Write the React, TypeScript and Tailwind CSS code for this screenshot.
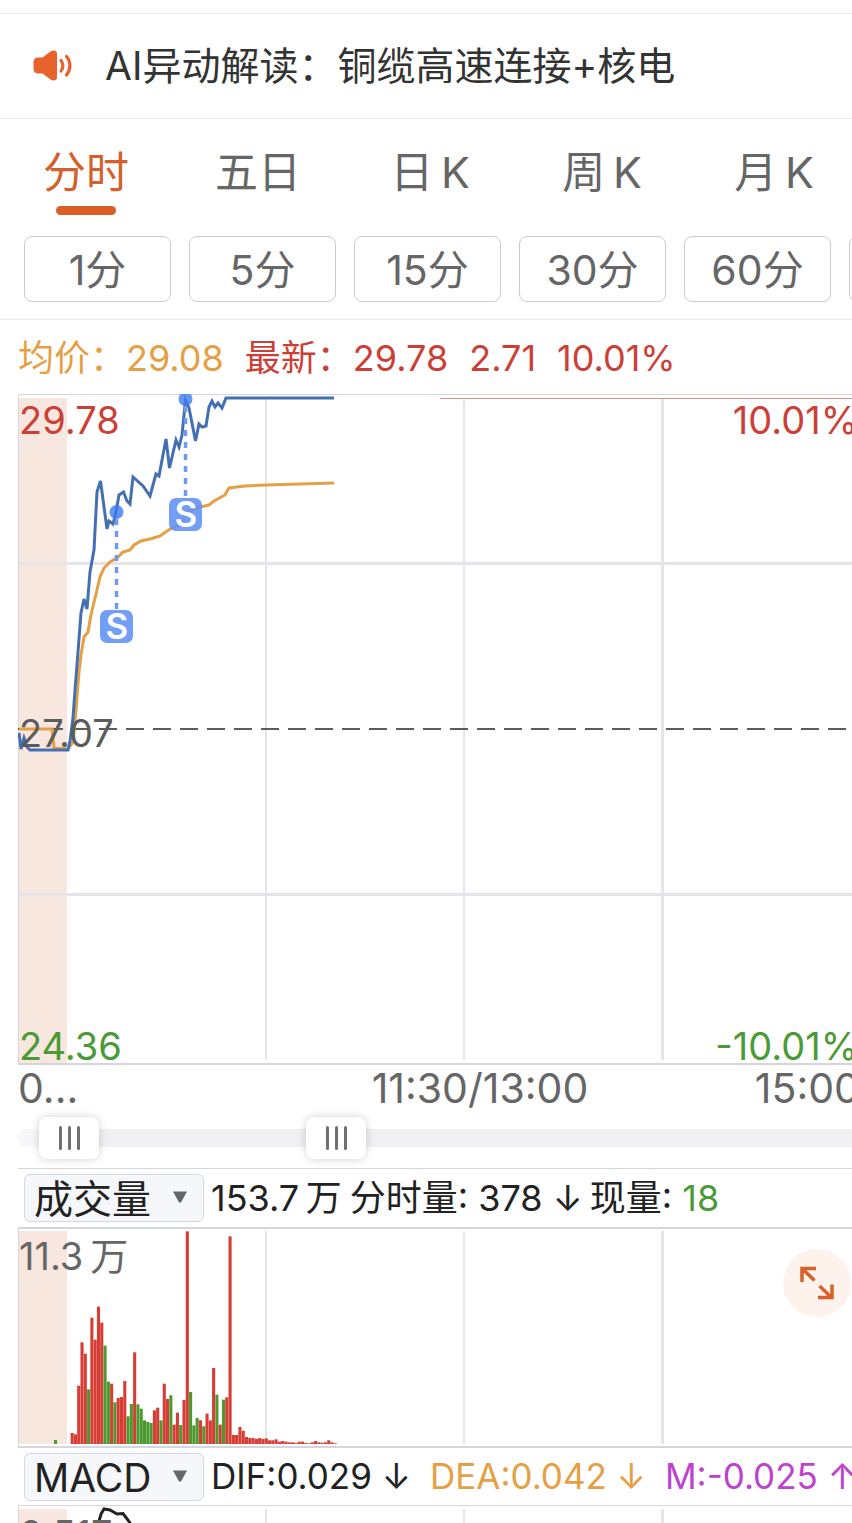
import { useState } from 'react'
import clsx from 'clsx'

const tabs = ['分时', '五日', '日\u2009K', '周\u2009K', '月\u2009K']
const intervals = ['1分', '5分', '15分', '30分', '60分', '120分']

const pricePoints =
  '19,733 21,749 24,738 27,747 30,750 68,750 70,741 73,718 75,690 78,652 81,613 84,599 87,609 90,572 94,550 97,492 100.5,481 107,529 109,521 113,524 116,512 119,495 123.5,492 127,501 130,504 133,477 143,486 150,496 156,474 159,476 166,439 169.5,468 176,440 179,447 182,435 185.5,400 189,408 195.5,441 199,424 202,427 206,426 209,407 212,401 215,407 218,403 222,408 226,398 334,398'

const averagePoints =
  '19,729 52,729 54,748 68,749 73,742 76,710 79,672 81,655 84,637 88,632 91,615 96,594 100,577 104,568 110,562 117,558 123,552 130,550 134,545 141,541 150,539 160,536 170,529 182,524 186,512 200,507 209,505 214,501 225,495 229,488 245,486 266,485 334,483'

const sellMarks = [
  { x: 117, dot: 512, badge: 627 },
  { x: 186, dot: 399, badge: 515 },
]

// one entry per minute, negative = down minute
const volumes = [
  33, 29, 175, 305, 271, -164, 379, 313, 412, 364, -295, -187, 181, -125, 138, 141, 189, -83, -120, 275,
  -119, -106, -71, -66, -63, 101, 109, -71, 181, 135, -146, 58, 94, -57, 132, 638, -156, -56, -78, 71,
  -53, 91, 71, 228, -148, 58, -133, 140, 623, 27, 27, 51, 40, 21, 18, 18, 15, 18, 15, 17,
  11, 11, 14, 7, 9, 7, 5, 5, 3, 7, 7, 3, 2, 5, 9, 5, 4, 5, 11, 5, 2,
]

function SpeakerIcon() {
  return (
    <svg className="h-8 w-10 shrink-0" viewBox="0 0 40 32" fill="none">
      <path
        d="M5 7.500h4.500L17.500 1.500C20 -.2 24 .2 24 3.500v24c0 3.300-4 3.700-6.500 2L9.500 23.500H5C2.200 23.500.5 21.700.5 19v-7C.5 9.200 2.200 7.500 5 7.500Z"
        fill="#e8632c"
      />
      <path d="M28 10.500c2.500 3 2.500 7.500 0 10.500M33.500 6.500c4.500 5 4.500 13.500 0 18.500" stroke="#e8632c" strokeWidth="3.200" strokeLinecap="round" />
    </svg>
  )
}

function ExpandIcon() {
  return (
    <svg className="h-9 w-9" viewBox="0 0 36 36" fill="none" stroke="#d9622b" strokeWidth="3.500">
      <path d="M3 17V3.500H17M3.500 4l12 11.500M33 19.500v13H19M32.500 32.500L20.500 21" />
    </svg>
  )
}

function Handle({ value }: { value: number }) {
  return (
    <div
      className="pointer-events-none absolute top-0 flex h-[42px] w-[60px] -translate-x-1/2 items-center justify-center gap-[6px] rounded-lg bg-white shadow-[0_0_8px_rgba(0,0,0,0.18)]"
      style={{ left: `${value / 10}%` }}
    >
      <span className="h-6 w-[3px] rounded-full bg-[#707070]" />
      <span className="h-6 w-[3px] rounded-full bg-[#707070]" />
      <span className="h-6 w-[3px] rounded-full bg-[#707070]" />
    </div>
  )
}

function RangeSlider() {
  const [from, setFrom] = useState(61)
  const [to, setTo] = useState(378)

  return (
    <div className="relative flex h-[42px] items-center">
      <div className="h-[18px] w-full overflow-hidden rounded-full bg-[#f0f0f3]">
        <div className="h-full bg-[#f7f7f9]" style={{ width: `${from / 10}%` }} />
      </div>
      <input
        type="range"
        aria-label="开始时间"
        min={0}
        max={1000}
        value={from}
        onChange={e => setFrom(Math.min(Number(e.target.value), to))}
        className="absolute inset-y-0 left-0 w-1/5 opacity-0"
      />
      <input
        type="range"
        aria-label="结束时间"
        min={0}
        max={1000}
        value={to}
        onChange={e => setTo(Math.max(Number(e.target.value), from))}
        className="absolute inset-y-0 right-0 w-4/5 opacity-0"
      />
      <Handle value={from} />
      <Handle value={to} />
    </div>
  )
}

function IndicatorSelect({ label, options }: { label: string; options: string[] }) {
  return (
    <div className="relative shrink-0">
      <select
        aria-label={label}
        className="block h-12 w-[180px] appearance-none rounded-md border border-[#d5d7de] bg-[#f6f7fa] pt-[2px] pl-[9px] text-[39px] leading-[44px] text-[#222]"
      >
        {options.map(option => (
          <option key={option}>{option}</option>
        ))}
      </select>
      <svg className="pointer-events-none absolute top-[17px] right-[17px] h-3 w-[14px]" viewBox="0 0 14 12">
        <path d="M0 .5h14L8 11.500H6Z" fill="#666" />
      </svg>
    </div>
  )
}

function PriceChart() {
  return (
    <div className="relative">
      <svg className="block h-auto w-full" viewBox="18 394 842 671" fill="none">
        <rect x="19" y="398" width="48" height="665" fill="#f8e7de" />
        <path d="M266 398V1060M464 398V1060" stroke="#e4e5ea" strokeWidth="2" />
        <path d="M662.500 398V1060M18 563.500H860M18 894.500H860" stroke="#e4e5ea" strokeWidth="3" />
        <path d="M18 394.500H860M18.500 394V1064" stroke="#d5d6dc" />
        <path d="M18 1064H860" stroke="#d5d6dc" strokeWidth="2" />
        <path d="M440 398.500H860" stroke="#dc8f8f" />
        <path d="M18 729H860" stroke="#5c5c5c" strokeWidth="2" strokeDasharray="18 9" />
        <polyline points={averagePoints} stroke="#e59f45" strokeWidth="3" />
        <polyline points={pricePoints} stroke="#4470b2" strokeWidth="3" />
        {sellMarks.map(mark => (
          <g key={mark.x}>
            <path
              d={`M${mark.x - 0.5} ${mark.dot + 7}V${mark.badge - 17}`}
              stroke="#6f9bee"
              strokeWidth="3.500"
              strokeDasharray="6 6"
            />
            <circle cx={mark.x - 0.5} cy={mark.dot} r="7" fill="#3f7af0" fillOpacity="0.8" />
            <g opacity="0.9">
              <rect x={mark.x - 17} y={mark.badge - 17} width="33" height="33" rx="7" fill="#6494f4" />
              <text x={mark.x} y={mark.badge + 12} textAnchor="middle" fill="#fff" className="text-[35px] font-semibold">
                S
              </text>
            </g>
          </g>
        ))}
      </svg>
      <div className="absolute inset-0 flex flex-col justify-between pl-px text-[38px] leading-[38px]">
        <div className="flex justify-between pt-[7px] pr-[2px] text-[#cb3f37]">
          <span>29.78</span>
          <span>10.01%</span>
        </div>
        <div className="text-[#5c5c5c]">27.07</div>
        <div className="flex justify-between pr-[2px] text-[#4a9a35]">
          <span>24.36</span>
          <span>-10.01%</span>
        </div>
      </div>
    </div>
  )
}

function VolumeChart() {
  return (
    <div className="relative">
      <svg className="block h-auto w-full" viewBox="18 1227 842 221" fill="none">
        <rect x="19" y="1231" width="48" height="213" fill="#f8e7de" />
        <path d="M266 1231V1444M464 1231V1444" stroke="#e4e5ea" strokeWidth="2" />
        <path d="M662.500 1231V1444" stroke="#e4e5ea" strokeWidth="3" />
        <path d="M18 1228H860M18 1447H860" stroke="#d5d6dc" strokeWidth="2" />
        <path d="M18.500 1227V1447" stroke="#d5d6dc" />
        <rect x="54" y="1440" width="3" height="4" fill="#4a9a35" />
        {volumes.map((v, i) => {
          const height = Math.abs(v) / 3
          return (
            <rect
              key={i}
              x={70.6 + i * 3.29}
              y={1444 - height}
              width="3.100"
              height={height}
              fill={v > 0 ? '#d63d35' : '#4a9a30'}
            />
          )
        })}
      </svg>
      <span className="absolute top-[10px] left-px text-[38px] leading-[38px] text-[#666]">11.3&thinsp;万</span>
      <button
        aria-label="全屏"
        className="absolute top-[22px] right-[9px] flex h-[68px] w-[68px] items-center justify-center rounded-full bg-[#fdf2ec]"
      >
        <ExpandIcon />
      </button>
    </div>
  )
}

function MacdChart() {
  return (
    <div className="relative min-h-0 flex-1 overflow-hidden">
      <svg className="block h-auto w-full" viewBox="18 1505 842 221" fill="none">
        <rect x="19" y="1509" width="48" height="213" fill="#f8e7de" />
        <path d="M266 1509V1722M464 1509V1722" stroke="#e4e5ea" strokeWidth="2" />
        <path d="M662.500 1509V1722" stroke="#e4e5ea" strokeWidth="3" />
        <path d="M18 1505.500H860M18.500 1505V1722" stroke="#d5d6dc" />
        <polyline points="98,1525 101,1514 104,1509 110,1510 117,1514 123,1513.500 128,1520 132,1526" stroke="#222" strokeWidth="3" />
      </svg>
      <span className="absolute top-[10px] left-px text-[38px] leading-[38px] text-[#666]">0.517</span>
    </div>
  )
}

export default function App() {
  const [activeTab, setActiveTab] = useState('分时')

  return (
    <div className="flex h-screen w-full flex-col overflow-hidden bg-white font-['Inter','Noto_Sans_CJK_SC',sans-serif]">
      <div className="mt-[13px] flex h-[106px] shrink-0 items-center gap-8 border-y border-[#ebebeb] pl-[33px] text-[39px] whitespace-nowrap text-[#333]">
        <SpeakerIcon />
        <p>AI异动解读：铜缆高速连接+核电</p>
      </div>

      {/* 周期切换 */}
      <div className="shrink-0 overflow-hidden border-b border-[#ebebeb] pb-[17px]">
        <div className="flex">
          {tabs.map(tab => (
            <button
              key={tab}
              onClick={() => setActiveTab(tab)}
              className={clsx(
                'flex h-[96px] w-[172px] shrink-0 flex-col items-center justify-end gap-[7px] text-[43px] leading-[54px]',
                activeTab === tab ? 'text-[#d4602b]' : 'text-[#666]'
              )}
            >
              {tab}
              <span className={clsx('h-[9px] w-[60px] rounded-full', activeTab === tab && 'bg-[#d95f26]')} />
            </button>
          ))}
        </div>
        <div className="mt-[21px] flex gap-[18px] pl-6">
          {intervals.map(interval => (
            <button
              key={interval}
              className="h-[66px] w-[147px] shrink-0 rounded-lg border border-[#ccc] pt-[2px] text-[41px] leading-[62px] text-[#666]"
            >
              {interval}
            </button>
          ))}
        </div>
      </div>

      <div className="flex h-[74px] shrink-0 items-center gap-[21px] pt-[2px] pl-[18px] text-[36px] whitespace-nowrap text-[#cb3f37]">
        <span className="text-[#e59f45]">均价：29.08</span>
        <span>最新：29.78</span>
        <span>2.71</span>
        <span>10.01%</span>
      </div>

      {/* 图表区域 */}
      <div className="-mr-2 flex min-h-0 flex-1 flex-col pl-[18px]">
        <PriceChart />
        <div className="grid h-[52px] shrink-0 grid-cols-[42%_1fr_auto] items-start text-[41px] leading-[46px] text-[#666]">
          <span>0...</span>
          <span>11:30/13:00</span>
          <span>15:00</span>
        </div>
        <RangeSlider />

        <div className="mt-[9px] flex h-[59px] shrink-0 items-center gap-[7px] border-t border-[#d5d6dc] pl-[6px] text-[36px] whitespace-nowrap text-[#222]">
          <IndicatorSelect label="副图指标一" options={['成交量', '成交额']} />
          <span>153.7&thinsp;万</span>
          <span className="ml-px">分时量: 378 ↓</span>
          <span>
            现量: <span className="text-[#4a9a35]">18</span>
          </span>
        </div>
        <VolumeChart />

        <div className="flex h-[57px] shrink-0 items-center gap-[7px] pl-[6px] text-[35px] whitespace-nowrap text-[#222]">
          <IndicatorSelect label="副图指标二" options={['MACD', 'KDJ']} />
          <span>DIF:0.029 ↓</span>
          <span className="ml-3 text-[#e59f45]">DEA:0.042 ↓</span>
          <span className="ml-3 text-[#bd43cf]">M:-0.025 ↑</span>
        </div>
        <MacdChart />
      </div>
    </div>
  )
}
